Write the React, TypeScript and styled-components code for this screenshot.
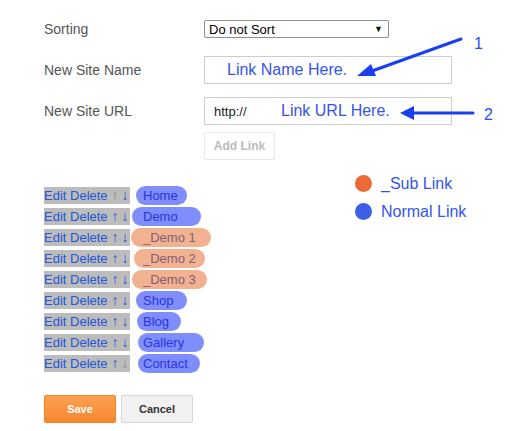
import React from "react";
import styled, { createGlobalStyle } from "styled-components";

const Global = createGlobalStyle`
  html, body { margin: 0; padding: 0; background: #fff; }
  body { font-family: "Liberation Sans", Arial, sans-serif; }
`;

const Page = styled.div`
  position: relative;
  width: 511px;
  height: 431px;
  padding: 20px 0 0 44px;
  box-sizing: border-box;
  overflow: hidden;
`;

const Form = styled.div`
  display: grid;
  grid-template-columns: 160px auto;
`;

const Label = styled.div<{ $h: number; $mt?: number }>`
  height: ${(p) => p.$h}px;
  margin-top: ${(p) => p.$mt ?? 0}px;
  display: flex;
  align-items: center;
  font-size: 14px;
  color: #555;
`;

const Field = styled.div<{ $mt?: number }>`
  margin-top: ${(p) => p.$mt ?? 0}px;
`;

const Select = styled.div`
  width: 185px;
  height: 18px;
  box-sizing: border-box;
  border: 1px solid #8f8f8f;
  border-radius: 2px;
  display: flex;
  align-items: center;
  justify-content: space-between;
  padding: 0 5px 0 4px;
  font-size: 13px;
  color: #000;
`;

const Caret = styled.span`
  font-size: 9px;
  color: #111;
`;

const Input = styled.div<{ $pl: number }>`
  width: 248px;
  height: 28px;
  box-sizing: border-box;
  border: 1px solid #ccc;
  display: flex;
  align-items: center;
  padding-left: ${(p) => p.$pl}px;
`;

const Prefix = styled.span`
  font-size: 13px;
  color: #222;
  width: 67px;
`;

const Note = styled.span`
  font-size: 16px;
  color: #3355ee;
`;

const AddButton = styled.div`
  width: 71px;
  height: 28px;
  box-sizing: border-box;
  border: 1px solid #e6e6e6;
  border-radius: 2px;
  display: flex;
  align-items: center;
  justify-content: center;
  font-size: 12px;
  font-weight: bold;
  color: #bbb;
`;

const Lower = styled.div`
  display: flex;
  margin-top: 25px;
`;

const List = styled.div`
  width: 311px;
  display: flex;
  flex-direction: column;
`;

const Row = styled.div`
  height: 21px;
  display: flex;
  align-items: center;
`;

const Actions = styled.div`
  width: 86px;
  height: 17px;
  background: #bcbcbc;
  display: flex;
  align-items: center;
  font-size: 13px;
  color: #2557d6;
  white-space: nowrap;
  overflow: hidden;
`;

const ActionText = styled.span`
  width: 66px;
`;

const Arrow = styled.span<{ $off?: boolean }>`
  width: 10px;
  text-align: center;
  font-size: 14px;
  line-height: 17px;
  color: ${(p) => (p.$off ? "#8c8c8c" : "#2557d6")};
`;

const Pill = styled.span<{ $sub?: boolean; $w: number; $ml: number; $pl: number }>`
  margin-left: ${(p) => p.$ml}px;
  width: ${(p) => p.$w}px;
  padding-left: ${(p) => p.$pl}px;
  box-sizing: border-box;
  height: 19px;
  border-radius: 10px;
  display: flex;
  align-items: center;
  font-size: 13px;
  background: ${(p) => (p.$sub ? "#f2b291" : "#7f8dfd")};
  color: ${(p) => (p.$sub ? "#835d72" : "#2a35e0")};
`;

const Legend = styled.div`
  display: flex;
  flex-direction: column;
  gap: 11px;
  margin-top: -10px;
`;

const LegendItem = styled.div`
  display: flex;
  align-items: center;
  gap: 9px;
  height: 17px;
  font-size: 16px;
  color: #3355ee;
`;

const Dot = styled.span<{ $c: string }>`
  width: 17px;
  height: 17px;
  border-radius: 50%;
  background: ${(p) => p.$c};
`;

const Buttons = styled.div`
  display: flex;
  gap: 5px;
  margin-top: 21px;
`;

const Btn = styled.div<{ $primary?: boolean }>`
  width: 72px;
  height: 28px;
  box-sizing: border-box;
  border-radius: 2px;
  display: flex;
  align-items: center;
  justify-content: center;
  font-size: 11px;
  font-weight: bold;
  color: ${(p) => (p.$primary ? "#fff" : "#333")};
  background: ${(p) =>
    p.$primary ? "linear-gradient(#fea150, #f5862f)" : "#f1f1f1"};
  border: 1px solid ${(p) => (p.$primary ? "#f0822c" : "#d6d6d6")};
`;

const Overlay = styled.svg`
  position: absolute;
  left: 0;
  top: 0;
  pointer-events: none;
`;

const Num = styled.span<{ $x: number; $y: number }>`
  position: absolute;
  left: ${(p) => p.$x}px;
  top: ${(p) => p.$y}px;
  font-size: 16px;
  color: #2a4ef0;
`;

const links = [
  { name: "Home", sub: false, w: 51, ml: 6, pl: 7 },
  { name: "Demo", sub: false, w: 69, ml: 2, pl: 11 },
  { name: "_Demo 1", sub: true, w: 80, ml: 1, pl: 12 },
  { name: "_Demo 2", sub: true, w: 71, ml: 4, pl: 9 },
  { name: "_Demo 3", sub: true, w: 75, ml: 2, pl: 11 },
  { name: "Shop", sub: false, w: 51, ml: 6, pl: 7 },
  { name: "Blog", sub: false, w: 44, ml: 7, pl: 6 },
  { name: "Gallery", sub: false, w: 66, ml: 8, pl: 5 },
  { name: "Contact", sub: false, w: 62, ml: 8, pl: 5 },
];

export default function App() {
  return (
    <>
      <Global />
      <Page>
        <Form>
          <Label $h={18}>Sorting</Label>
          <Field>
            <Select>
              <span>Do not Sort</span>
              <Caret>▼</Caret>
            </Select>
          </Field>
          <Label $h={28} $mt={18}>New Site Name</Label>
          <Field $mt={18}>
            <Input $pl={22}>
              <Note>Link Name Here.</Note>
            </Input>
          </Field>
          <Label $h={28} $mt={13}>New Site URL</Label>
          <Field $mt={13}>
            <Input $pl={9}>
              <Prefix>http://</Prefix>
              <Note>Link URL Here.</Note>
            </Input>
          </Field>
          <div />
          <Field $mt={7}>
            <AddButton>Add Link</AddButton>
          </Field>
        </Form>
        <Lower>
          <List>
            {links.map((l, i) => (
              <Row key={l.name}>
                <Actions>
                  <ActionText>Edit Delete</ActionText>
                  <Arrow $off={i === 0}>↑</Arrow>
                  <Arrow $off={i === links.length - 1}>↓</Arrow>
                </Actions>
                <Pill $sub={l.sub} $w={l.w} $ml={l.ml} $pl={l.pl}>
                  {l.name}
                </Pill>
              </Row>
            ))}
          </List>
          <Legend>
            <LegendItem>
              <Dot $c="#ec6a35" />
              _Sub Link
            </LegendItem>
            <LegendItem>
              <Dot $c="#3d5fe6" />
              Normal Link
            </LegendItem>
          </Legend>
        </Lower>
        <Buttons>
          <Btn $primary>Save</Btn>
          <Btn>Cancel</Btn>
        </Buttons>
        <Overlay width="511" height="431" viewBox="0 0 511 431">
          <line x1="461" y1="39" x2="372" y2="71" stroke="#1a3ff0" strokeWidth="3" strokeLinecap="round" />
          <polygon points="357,76 371,64 376,76" fill="#1a3ff0" />
          <line x1="473" y1="113" x2="412" y2="113" stroke="#1a3ff0" strokeWidth="3" strokeLinecap="round" />
          <polygon points="400,113 414,106 414,120" fill="#1a3ff0" />
        </Overlay>
        <Num $x={474} $y={35}>1</Num>
        <Num $x={484} $y={106}>2</Num>
      </Page>
    </>
  );
}
